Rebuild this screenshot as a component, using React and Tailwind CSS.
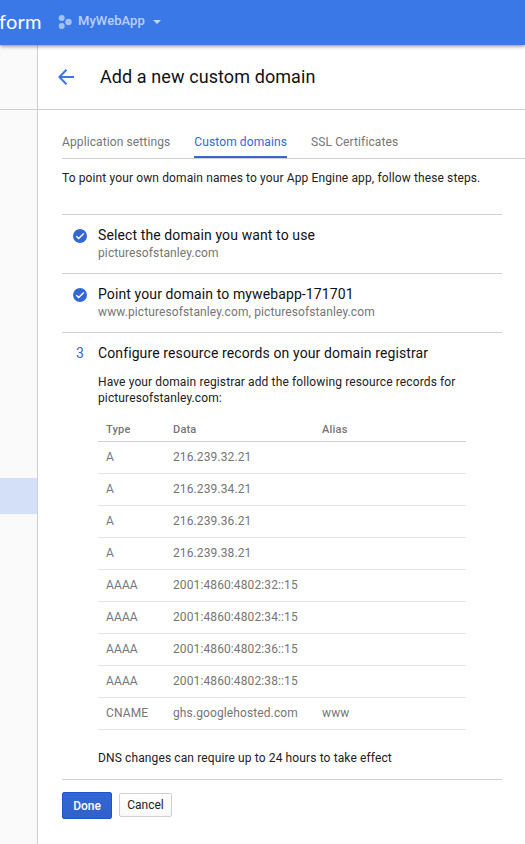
const records = [
  ['A', '216.239.32.21', ''],
  ['A', '216.239.34.21', ''],
  ['A', '216.239.36.21', ''],
  ['A', '216.239.38.21', ''],
  ['AAAA', '2001:4860:4802:32::15', ''],
  ['AAAA', '2001:4860:4802:34::15', ''],
  ['AAAA', '2001:4860:4802:36::15', ''],
  ['AAAA', '2001:4860:4802:38::15', ''],
  ['CNAME', 'ghs.googlehosted.com', 'www'],
];

function CheckBadge() {
  return (
    <svg width="14" height="14" viewBox="0 0 14 14" className="mt-[14px]">
      <circle cx="7" cy="7" r="7" fill="#3367d6" />
      <path d="M3.3 7.2 5.7 9.6 10.8 4.5" fill="none" stroke="#fff" strokeWidth="1.4" />
    </svg>
  );
}

function DoneStep({ title, detail }) {
  return (
    <div className="flex h-[59px] border-t border-[#d0d0d0] pl-[11px]">
      <div className="w-[25px] shrink-0"><CheckBadge /></div>
      <div className="whitespace-nowrap pt-[10px]">
        <div className="text-[14px] leading-[20px] tracking-[0.11px] text-[#111]">{title}</div>
        <div className="text-[12px] leading-[16px] tracking-[0.11px] text-[#757575]">{detail}</div>
      </div>
    </div>
  );
}

export default function App() {
  return (
    <div className="flex h-[844px] w-[525px] flex-col overflow-hidden bg-white font-['Roboto',sans-serif] text-[12px] text-[#212121]">
      <header className="z-10 flex h-[45px] shrink-0 items-center bg-[#3b78e7] text-white shadow-[0_1px_4px_rgba(0,0,0,0.5)]">
        <div className="-ml-px w-[59px] pb-[3px] font-['Lato',sans-serif] text-[20px] leading-[24px] tracking-[0.2px]">form</div>
        <svg className="-mt-[2px]" width="14" height="14" viewBox="0 0 14 14" fill="#a4c1f4">
          <circle cx="3.7" cy="3" r="3" /><circle cx="10.5" cy="7" r="3.2" /><circle cx="3.7" cy="11" r="3" />
        </svg>
        <div className="-mt-[3px] ml-[6px] text-[13px] font-medium tracking-[0.05px] text-[#bbd0f7]">MyWebApp</div>
        <svg className="-mt-[2px] ml-2" width="8" height="4" viewBox="0 0 8 4"><path d="M0 0h8L4 4z" fill="#c4d7f8" /></svg>
      </header>
      <div className="flex flex-1">
        <aside className="w-[38px] shrink-0 border-r border-[#d0d0d0] bg-[#fafafa]">
          <div className="h-[65px] border-b border-[#d0d0d0]" />
          <div className="mt-[368px] h-[36px] bg-[#d4e0f7]" />
        </aside>
        <main className="flex-1">
          <div className="flex h-[65px] items-center border-b border-[#d0d0d0] pl-[20px]">
            <svg width="16" height="16" viewBox="0 0 16 16" fill="none" stroke="#3b78e7" strokeWidth="2"><path d="M16 8H2M8.5 .8 1.4 8l7.1 7.2" /></svg>
            <h1 className="-mt-[2px] ml-[26px] text-[18px] tracking-[0.09px] text-[#111]">Add a new custom domain</h1>
          </div>
          <div className="pl-6">
            <nav className="mt-4 flex h-[33px] gap-6 whitespace-nowrap border-b border-[#d0d0d0] leading-[32px] tracking-[0.11px] text-[#757575]">
              <span>Application settings</span>
              <span className="h-[32px] border-b-2 border-[#3367d6] text-[#3367d6]">Custom domains</span>
              <span>SSL Certificates</span>
            </nav>
            <div className="w-[440px]">
              <p className="mt-[11px] h-[44px] whitespace-nowrap leading-[16px] tracking-[0.12px]">To point your own domain names to your App Engine app, follow these steps.</p>
              <DoneStep title="Select the domain you want to use" detail="picturesofstanley.com" />
              <DoneStep title="Point your domain to mywebapp-171701" detail="www.picturesofstanley.com, picturesofstanley.com" />
              <section className="h-[448px] border-y border-[#d0d0d0] px-9 pt-[10px]">
                <div className="-ml-[22px] flex whitespace-nowrap text-[14px] leading-[20px]">
                  <span className="w-[22px] text-[#3367d6]">3</span>
                  <span className="tracking-[0.11px] text-[#111]">Configure resource records on your domain registrar</span>
                </div>
                <p className="mt-[11px] whitespace-nowrap leading-[16px] tracking-[0.12px]">Have your domain registrar add the following resource records for<br />picturesofstanley.com:</p>
                <div className="mt-3 grid h-[24px] grid-cols-[67px_149px_1fr] border-b border-[#d0d0d0] pl-2 text-[11px] font-medium leading-[24px] tracking-[0.2px] text-[#757575]">
                  <span>Type</span><span>Data</span><span>Alias</span>
                </div>
                {records.map(([type, data, alias]) => (
                  <div key={data} className="grid h-[32px] grid-cols-[67px_149px_1fr] border-b border-[#e5e5e5] pl-2 leading-[31px] tracking-[0.11px] text-[#757575]">
                    <span>{type}</span><span>{data}</span><span>{alias}</span>
                  </div>
                ))}
                <p className="mt-5 whitespace-nowrap leading-[16px] tracking-[0.12px]">DNS changes can require up to 24 hours to take effect</p>
              </section>
              <div className="mt-3 flex items-start gap-[7px]">
                <button className="h-[27px] w-[50px] rounded-[2px] border border-[#1d55cf] bg-linear-to-b from-[#3367d6] to-[#3161c9] font-medium text-white">Done</button>
                <button className="mt-px h-[24px] w-[53px] rounded-[2px] border border-[#d0d0d0] bg-linear-to-b from-white to-[#f8f8f8]">Cancel</button>
              </div>
            </div>
          </div>
        </main>
      </div>
    </div>
  );
}
